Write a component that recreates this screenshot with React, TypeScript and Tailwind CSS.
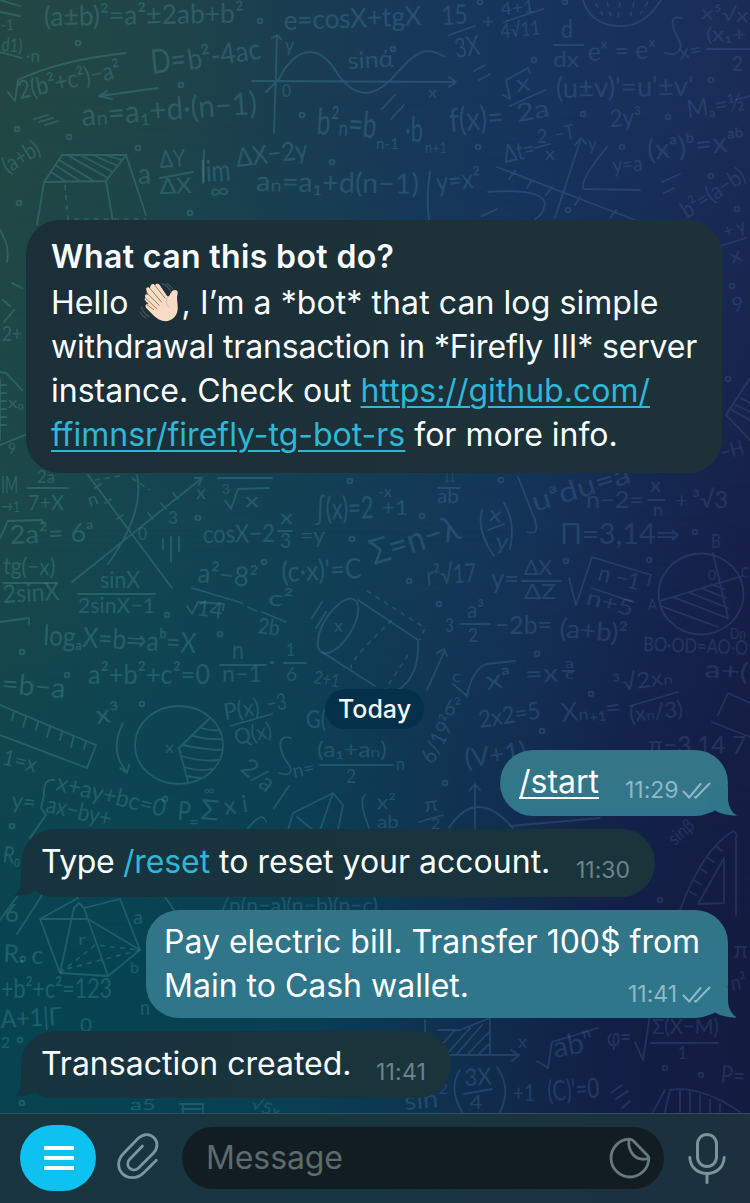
import React from "react";

type Formula = [x: number, y: number, width: number, size: number, angle: number, text: string];

const formulas: Formula[] = [
  [44, 26, 200, 27, -1, "(a±b)²=a²±2ab+b²"],
  [284, 30, 138, 27, -2, "e=cosX+tgX"],
  [1, 30, 13, 15, 0, "-1"],
  [1, 51, 21, 19, 4, "d1)"],
  [26, 62, 14, 17, 0, "·n"],
  [20, 99, 104, 25, -12, "2(b²+c²)−a²"],
  [152, 74, 35, 34, -6, "D="],
  [189, 70, 74, 29, -9, "b²-4ac"],
  [82, 126, 176, 31, -4, "aₙ=a₁+d·(n−1)"],
  [8, 174, 40, 23, -32, "(a+b)"],
  [285, 52, 9, 19, 0, "y"],
  [282, 97, 9, 17, 0, "0"],
  [348, 69, 46, 23, -3, "sinά"],
  [428, 98, 9, 16, 0, "x"],
  [316, 134, 60, 36, 4, "b²ₙ=b"],
  [376, 149, 23, 15, 0, "n-1"],
  [405, 142, 18, 34, 0, "·b"],
  [425, 153, 22, 15, 0, "n+1"],
  [138, 184, 13, 28, 0, "a"],
  [160, 168, 26, 24, -4, "ΔY"],
  [160, 194, 32, 22, -2, "ΔX"],
  [201, 182, 30, 30, -3, "lim"],
  [210, 199, 20, 22, -4, "∞"],
  [237, 167, 72, 26, -7, "ΔX−2y"],
  [256, 191, 163, 28, 1, "aₙ=a₁+d(n−1)"],
  [437, 192, 45, 27, -6, "y=x²"],
  [442, 25, 26, 27, -3, "15"],
  [456, 58, 25, 27, -8, "3X"],
  [482, 28, 12, 20, 0, "+"],
  [501, 15, 34, 17, -5, "4+1"],
  [501, 38, 40, 20, -5, "4√11"],
  [561, 38, 12, 25, 0, "d"],
  [553, 67, 26, 22, 0, "dx"],
  [588, 61, 68, 26, -2, "eˣ = eˣ"],
  [680, 60, 23, 21, -10, "x="],
  [706, 41, 40, 19, 0, "(x₁+"],
  [732, 71, 11, 21, 0, "2"],
  [701, 19, 47, 19, 4, "x⁵√x"],
  [517, 92, 14, 23, -8, "x"],
  [518, 122, 33, 25, -10, "2a"],
  [556, 98, 138, 28, -1, "(u±v)'=u'±v'"],
  [450, 132, 54, 33, -4, "f(x)="],
  [610, 127, 32, 24, -3, "2y³"],
  [688, 118, 58, 25, -8, "Mₐ=½"],
  [505, 163, 32, 25, -12, "Δt="],
  [537, 143, 10, 19, 0, "2"],
  [545, 160, 10, 18, 0, "x"],
  [556, 142, 20, 21, -10, "−T"],
  [588, 150, 9, 17, 0, "y"],
  [613, 173, 30, 22, -4, "y=a"],
  [648, 160, 98, 28, -6, "(xᵃ)ᵇ=xᵃᵇ"],
  [687, 219, 72, 23, -33, "b²=(a−b)"],
  [1, 493, 17, 23, 0, "IM"],
  [37, 483, 18, 17, 0, "2a"],
  [28, 510, 36, 22, 0, "7+X"],
  [1, 512, 19, 16, 0, "→1"],
  [10, 544, 84, 26, -2, "2a²= 6ᵃ"],
  [3, 574, 52, 24, 2, "tg(−x)"],
  [3, 603, 57, 25, -3, "2sinX"],
  [90, 507, 10, 18, -20, "n"],
  [196, 499, 10, 20, 0, "x"],
  [168, 524, 10, 18, 0, "3"],
  [138, 540, 9, 17, 0, "0"],
  [100, 588, 40, 23, 0, "sinX"],
  [78, 613, 77, 22, 0, "2sinX−1"],
  [245, 507, 14, 20, 0, "x"],
  [222, 494, 8, 13, 0, "3"],
  [203, 543, 72, 25, -1, "cosX−2"],
  [280, 524, 13, 20, 0, "x"],
  [280, 548, 11, 21, 0, "3"],
  [300, 543, 25, 22, 0, "=y"],
  [315, 520, 59, 31, -2, "∫(x)=2"],
  [197, 582, 60, 27, 5, "a²−8²"],
  [196, 615, 26, 22, 8, "14"],
  [268, 606, 26, 22, 0, "c²"],
  [257, 633, 22, 22, 8, "2b"],
  [282, 582, 80, 28, -3, "(c·x)'=C"],
  [43, 645, 153, 28, 3, "logₐX=b⇒aᵇ=X"],
  [88, 684, 122, 27, 0, "a²+b²+c²=0"],
  [232, 659, 12, 25, 0, "n"],
  [222, 682, 40, 23, 0, "n−1"],
  [268, 668, 8, 20, 0, "·"],
  [286, 656, 9, 18, 0, "1"],
  [286, 681, 11, 19, 0, "6"],
  [313, 683, 26, 18, 10, "2+1"],
  [1, 693, 64, 28, 5, "=b−a"],
  [334, 632, 9, 17, 0, "x"],
  [444, 482, 11, 17, 0, "11"],
  [437, 503, 22, 20, 0, "ab"],
  [378, 497, 14, 15, 0, "-x"],
  [382, 515, 26, 22, 0, "+1"],
  [374, 565, 92, 35, -17, "Σ=n−λ"],
  [488, 521, 13, 22, 8, "x"],
  [495, 549, 13, 23, 5, "y"],
  [535, 512, 112, 28, -17, "uᵃdu=aⁿ"],
  [586, 508, 58, 23, 0, "n−2="],
  [650, 492, 11, 20, 0, "x"],
  [653, 516, 10, 18, 0, "n"],
  [675, 508, 13, 22, 0, "+"],
  [692, 508, 36, 24, 0, "³√3"],
  [560, 544, 120, 29, 0, "Π=3,14⇒"],
  [427, 585, 50, 26, -4, "r²√17"],
  [491, 588, 28, 26, 0, "y="],
  [524, 575, 28, 22, 0, "ΔX"],
  [524, 599, 32, 22, 0, "ΔZ"],
  [597, 580, 42, 23, 14, "n −1"],
  [585, 604, 48, 22, 15, "n+5"],
  [711, 548, 10, 20, 0, "B"],
  [648, 610, 9, 16, 0, "A"],
  [708, 580, 8, 14, 0, "0"],
  [741, 578, 8, 15, 0, "C"],
  [730, 639, 16, 16, 0, "Dn"],
  [445, 632, 9, 20, 0, "3"],
  [467, 618, 17, 24, 0, "a³"],
  [468, 642, 10, 20, 0, "2"],
  [495, 634, 57, 25, 0, "−2b="],
  [559, 637, 68, 26, 5, "(a+b)²"],
  [643, 651, 105, 20, 2, "BO·OD=AO·O"],
  [452, 682, 9, 16, 0, "c"],
  [487, 690, 26, 26, -10, "xᵃ"],
  [525, 683, 34, 25, -2, "=x"],
  [565, 668, 9, 13, 0, "a"],
  [565, 679, 9, 13, 0, "c"],
  [614, 692, 60, 22, -8, "³√2xₙ"],
  [704, 677, 44, 24, 5, "a+("],
  [97, 724, 24, 25, -8, "x³"],
  [165, 753, 9, 16, 0, "x"],
  [225, 720, 36, 23, -9, "P(x)"],
  [268, 712, 20, 23, -9, "−3"],
  [236, 745, 38, 22, -12, "Q(x)"],
  [306, 728, 20, 25, 0, "G("],
  [239, 770, 36, 25, 40, "2/a"],
  [294, 778, 22, 19, -12, "n="],
  [317, 757, 70, 22, 0, "(a₁+aₙ)"],
  [346, 783, 10, 20, 0, "2"],
  [396, 770, 9, 17, 0, "n"],
  [1, 764, 35, 22, 14, "1=x"],
  [11, 808, 24, 23, 6, "y="],
  [55, 790, 112, 24, 14, "x+ay+bc=0"],
  [45, 812, 66, 24, 13, "ax−by+"],
  [177, 820, 13, 27, 5, "P"],
  [189, 828, 10, 18, 0, "="],
  [200, 819, 18, 28, 5, "Σ"],
  [204, 795, 10, 14, 0, "∞"],
  [225, 815, 24, 24, -8, "x i"],
  [433, 765, 50, 22, -62, "6/19²"],
  [445, 716, 18, 21, -8, "6²"],
  [480, 728, 62, 24, -9, "2x2=5"],
  [562, 722, 60, 26, -6, "Xₙ₊₁="],
  [630, 722, 54, 22, -6, "(xₙ/3)"],
  [648, 754, 98, 25, 0, "π−3,14 7"],
  [466, 768, 62, 26, -8, "(V+1)"],
  [377, 809, 19, 19, 0, "x²"],
  [377, 828, 22, 18, 0, "ab"],
  [425, 812, 14, 20, -8, "π"],
  [431, 829, 9, 15, 0, "2"],
  [675, 846, 28, 19, -42, "sinβ"],
  [2, 862, 18, 23, 8, "R₀"],
  [5, 922, 14, 25, 0, "6"],
  [3, 962, 40, 25, 3, "R. c"],
  [133, 924, 10, 20, 0, "a"],
  [130, 973, 9, 16, 0, "b"],
  [78, 945, 8, 16, 0, "r"],
  [1, 998, 111, 26, 0, "+b²+c²=123"],
  [1, 1028, 61, 25, -3, "A+1|Γ"],
  [80, 1032, 12, 20, 0, "0"],
  [1, 1048, 9, 15, 0, "2"],
  [140, 1015, 10, 22, 0, "n"],
  [220, 913, 158, 22, 0, "/n(n−a)(n−b)(n−c)"],
  [518, 1048, 9, 17, 0, "x"],
  [555, 1058, 40, 29, -11, "abⁿ"],
  [607, 1046, 24, 25, 0, "φ="],
  [652, 1034, 67, 22, 0, "Σ(X−M)"],
  [678, 1059, 9, 17, 0, "1"],
  [465, 1086, 27, 24, -3, "3X"],
  [470, 1109, 12, 20, 0, "4"],
  [513, 1101, 22, 23, 0, "+1"],
  [548, 1101, 52, 28, -4, "(C)'=0"],
  [405, 1110, 34, 25, -5, "sin"],
  [438, 1094, 10, 16, 0, "2"],
  [720, 1083, 24, 25, 5, "P="],
  [732, 991, 16, 22, -10, "n²"],
  [734, 958, 14, 24, 0, "π"],
  [2, 341, 20, 22, 0, "2+"],
  [8, 408, 16, 16, 0, "x₀"],
  [8, 454, 8, 16, 0, "9"],
  [726, 238, 22, 18, -20, "+ y"],
  [732, 264, 12, 20, -20, "x"],
  [733, 312, 12, 20, -10, "9"],
  [722, 460, 24, 20, -15, "−H"],
  [130, 1110, 26, 16, 0, "a5"],
  [250, 1108, 30, 16, 20, "√5x"],
];

const strokes: string[] = [
  "M0 0L20 6M0 12L20 16M0 52L22 58",
  "M8 92L15 101L18 80Q60 60 126 53",
  "M158 88L100 96M107 91L99 96L112 99",
  "M277 36L274 133M272 38L277 35L281 39M252 81L456 82M449 77L456 82L449 87M266 92L279 79C295 47 318 43 335 70S372 102 396 74S430 48 445 57",
  "M34 119L48 115M39 122L53 118M45 125L58 121",
  "M44 182L62 155H126L106 181ZM44 182L37 225M106 181L113 222M126 155L146 215M51 172L65 181M55 165L80 181M59 160L94 181M69 156L108 178M82 156L113 172M95 156L118 166M108 156L122 160",
  "M160 178L193 172M204 150L203 183",
  "M430 172Q426 196 429 220M449 35L475 26M504 22L543 9M554 45H583M510 106L545 90M503 95L510 99L506 80L528 68L530 73",
  "M583 0Q590 24 617 26T661 0M682 18C668 14 672 28 678 38S679 57 665 53M707 49H750M735 100L750 96",
  "M474 71L485 65M479 80L490 74M382 109L395 95M391 119L404 105M662 182L680 174M664 193L674 188",
  "M497 167L635 220M509 179L515 171M527 188L532 180M546 195L552 187M575 205L580 197M610 218L616 210M555 218L580 141M575 145L581 138L586 144M607 147Q578 182 584 189L640 190M488 192Q541 188 545 203Q544 214 535 219M535 148L550 144M482 216L497 209",
  "M28 488H68M3 583H56M0 538L8 521L42 520L43 524M78 594H155M0 622L29 618V624",
  "M88 475L172 588M72 582L202 478M195 478L202 478L199 485M137 475Q145 512 108 564M95 488L101 484M105 503L111 499M117 519L123 515M148 513L153 519M161 503L166 509M173 493L178 499M163 539V549M171 537V562M179 537V551",
  "M218 478H272M225 500L231 509L238 489L269 488M278 531H292M192 588L242 603M187 606L192 614L198 602L224 604L223 610M248 607L256 611M262 612L286 622M220 665H266M284 663H306M312 618L322 602M316 628L326 612",
  "M358 600L418 640Q420 676 398 690M322 652L375 686M427 690L444 652M437 653L444 649L447 656",
  "M438 488H460M482 510Q476 530 494 556M504 503Q516 523 510 549M488 530L504 524M518 477L535 520Q540 536 527 532M648 500H665M522 581H561M569 578L576 605L592 557L651 575L648 585M592 588L633 602M460 624H490M453 684L467 696Q472 670 486 664L515 661M563 671H574",
  "M659 600A42 40 0 1 1 743 588A42 40 0 1 1 659 600M660 601L742 576M713 553L728 618M673 597L727 618M688 592L728 608M701 588L726 598M711 584L724 589M661 606L718 627",
  "M0 705L96 745L87 768L0 735M14 712L12 720M26 717L23 727M38 722L36 730M50 727L47 737M62 732L60 740M74 736L71 747M86 741L84 749",
  "M123 723Q109 750 126 771M120 768L127 773L129 765M135 745A44 39 0 1 1 223 745A44 39 0 1 1 135 745M210 718L179 748L188 782M201 728Q212 731 219 730M193 736Q210 740 222 739M183 745Q205 750 223 750M181 756Q202 762 219 760M184 767Q200 772 212 769M186 776L200 778",
  "M230 726L272 714M291 738C275 733 280 753 287 762S291 777 279 773M320 765H393M54 780Q43 778 44 795L41 808L46 815L30 838M289 786L274 808M248 828Q263 810 266 822",
  "M288 830L293 813L333 793L343 805L338 830M333 793L320 830M297 817L313 830M365 795Q358 800 369 828",
  "M630 706L678 692M718 715L728 693L750 703M712 722L750 737M475 785V828M470 790L475 784L480 790M449 828Q476 786 513 828M510 826L600 818M419 822L443 815",
  "M680 910Q702 850 733 831Q738 833 736 838V915M698 904L724 858V903ZM690 892L696 895M695 881L701 884M701 869L707 873M708 858L714 862M717 847L722 851",
  "M40 919L60 973L108 976L140 950L120 899M40 919H88L140 950M40 919L78 898M60 973L74 908L79 903L84 908L108 976M84 908L120 899M0 920L22 890M17 934L42 895M163 894L174 910",
  "M425 1020V1055H518M511 1050L519 1055L512 1061M438 1030L460 1030L490 1018V1055M437 1050L455 1030M446 1055L470 1028M456 1055L482 1025M467 1055L489 1032M478 1055L489 1044",
  "M537 1061L548 1068L552 1042L598 1028M635 1042L643 1060L650 1015M651 1043H718M460 1070Q448 1088 462 1112M497 1067Q512 1088 500 1112M464 1094L492 1089M611 1093L622 1085M616 1099L628 1091M622 1108L630 1101",
  "M653 1112L665 1090M665 1112L670 1090Q700 1085 740 1112M680 1090V1112M690 1092V1112M700 1095V1112M710 1099V1112M720 1104V1112",
  "M180 1104H203V1112M183 1104V1112M182 1109H201",
  "M726 415L750 378M726 415L750 440M736 405L750 412M732 410L750 420M741 398L750 403",
  "M0 372L6 373L22 390M0 380V440M0 445L25 435M0 385H6M0 393H6M0 401H6M0 409H6M0 417H6M0 425H6",
  "M0 230Q10 245 7 262M12 283L22 288M3 300L10 306M14 310L4 322M720 246L746 238",
];

const dashedStrokes: string[] = [
  "M65 185L68 219H146",
  "M367 591L425 628L420 640M392 620Q345 665 352 668M408 655L385 690",
  "M595 3L603 15M607 2L612 20M620 2L618 20M634 2L630 18M648 2L640 14",
  "M60 973L95 945L140 950L62 970",
  "M95 480L120 476M132 478L150 490",
];

const dots: [number, number][] = [
  [78, 43], [181, 85], [260, 21], [302, 115], [17, 129], [69, 137], [138, 148], [332, 162], [19, 203], [190, 213],
  [480, 2], [565, 2], [393, 49], [534, 60], [583, 114], [668, 117], [478, 147], [622, 147], [711, 80], [711, 176], [737, 209], [568, 210],
  [22, 652], [67, 675], [198, 518], [350, 481], [352, 539], [264, 562], [220, 634], [167, 615],
  [501, 480], [422, 516], [409, 581], [439, 604], [566, 561], [695, 532], [649, 560], [537, 654], [591, 694],
  [142, 704], [165, 799], [12, 826], [542, 731], [445, 783], [23, 959], [20, 1040], [22, 1103], [665, 1068], [701, 1075], [660, 900],
  [732, 286], [728, 379],
];

function Wallpaper() {
  return (
    <div className="absolute inset-0 -z-10">
      <div className="absolute inset-0 bg-[linear-gradient(90deg,#224743_0%,#1f4547_20%,#1a3e50_38%,#17385a_55%,#16345c_72%,#18305a_88%,#1a2c56_100%)]" />
      <div className="absolute inset-0 bg-[linear-gradient(90deg,#1b4849_0%,#134651_20%,#123f55_45%,#143558_68%,#15264f_88%,#162048_100%)] [mask-image:linear-gradient(180deg,transparent_8%,black_46%)]" />
      <div className="absolute inset-0 bg-[linear-gradient(90deg,#074451_0%,#064352_18%,#093e53_42%,#0f304f_60%,#121e45_82%,#131b40_100%)] [mask-image:linear-gradient(180deg,transparent_44%,black_80%)]" />
      <svg className="absolute inset-0" width="750" height="1203" viewBox="0 0 750 1203" fill="none" aria-hidden="true">
        <defs>
          <linearGradient id="ink" gradientUnits="userSpaceOnUse" x1="0" y1="0" x2="750" y2="0">
            <stop offset="0" stopColor="#58b5a8" stopOpacity="0.26" />
            <stop offset="0.45" stopColor="#4f9fb4" stopOpacity="0.26" />
            <stop offset="0.75" stopColor="#5a86bd" stopOpacity="0.23" />
            <stop offset="1" stopColor="#6076b0" stopOpacity="0.21" />
          </linearGradient>
        </defs>
        <g stroke="url(#ink)" strokeWidth="1.8" strokeLinecap="round" strokeLinejoin="round">
          {strokes.map((d) => (
            <path key={d} d={d} />
          ))}
          <ellipse cx="338" cy="626" rx="14" ry="31" transform="rotate(32 338 626)" />
          {dots.map(([x, y]) => (
            <circle key={`${x}-${y}`} cx={x} cy={y} r="2.4" />
          ))}
        </g>
        <g stroke="url(#ink)" strokeWidth="1.6" strokeDasharray="5 5">
          {dashedStrokes.map((d) => (
            <path key={d} d={d} />
          ))}
        </g>
        <g fill="url(#ink)" className="font-['Lato','DejaVu_Sans',sans-serif] font-normal">
          {formulas.map(([x, y, width, size, angle, text]) => (
            <text
              key={`${x}-${y}`}
              x={x}
              y={y}
              fontSize={size}
              textLength={width}
              lengthAdjust="spacingAndGlyphs"
              transform={`rotate(${angle} ${x} ${y})`}
            >
              {text}
            </text>
          ))}
        </g>
      </svg>
    </div>
  );
}

function WavingHand() {
  return (
    <svg className="mx-[1px] inline-block h-[42px] w-[42px] align-[-9px]" viewBox="0 0 42 42" fill="none" aria-label="Waving hand">
      <path
        d="M6.4 16.4C5 14.4 7.3 12.2 9.1 13.8L7.4 9.3C6.4 6.8 9.2 5.3 10.8 7.3L11.5 5.2C12 2.5 14.8 2.2 16 4.3C17.3 2 20 2.5 21 4.4L27.9 14.7C29.2 15.8 30.3 15.2 31 13.5C31.9 11.2 33 8.9 36 9C38.5 9.1 39.3 11.1 38.5 13.3C37.3 17.3 38.7 21.5 38.8 26.8C38.8 35.7 32.2 41 24.6 40.1C18.8 39.3 14.8 34.7 10.9 30.8L7.5 27.2C5.3 24.8 7.3 22 9.9 23.5L6.2 19.4C5.4 18.3 5.5 17.3 6.4 16.4Z"
        fill="#f8dcc3"
      />
      <path d="M11 7.5L22.5 21M16 4.4L26 17.2M7.4 11.7L20.2 24.3M6.4 17.2L18 27.8M7.4 23.2L14.6 28.7" stroke="#9c7d6a" strokeWidth="1" strokeLinecap="round" />
      <path d="M28.8 15.5Q25.5 20.5 29.5 26" stroke="#dcbca4" strokeWidth="1" strokeLinecap="round" />
      <path d="M23.3 2.7Q29 5 32.1 11M27.9 2.8Q31.5 4.4 34 8M2.5 26Q4 32.5 10.6 36M1.2 31Q3 35 7 37.2" stroke="#42525b" strokeWidth="1.3" strokeLinecap="round" />
    </svg>
  );
}

function ReadTicks() {
  return (
    <svg className="h-[18px] w-[29px]" viewBox="0 0 29 18" fill="none" stroke="currentColor" strokeWidth="2" strokeLinecap="round">
      <path d="M1.5 9.5L7.2 15.500L18.5 2M13 15L13.800 15.700L27.500 1.500" />
    </svg>
  );
}

function OutgoingTail() {
  return (
    <svg className="absolute right-[-9px] bottom-0 h-[30px] w-[28px] text-[#30768a]" viewBox="0 0 28 30" fill="currentColor">
      <path d="M0 27Q3 26 6 24.500Q14 29.500 28 29.800Q20 25 19 14V0H0Z" />
    </svg>
  );
}

function IncomingTail() {
  return (
    <svg className="absolute bottom-0 left-[-7px] h-[32px] w-[30px] text-[#17333e]" viewBox="0 0 30 32" fill="currentColor">
      <path d="M30 30Q26 28.500 21 26Q14 30.800 0 31Q7 26 7 15V0H30Z" />
    </svg>
  );
}

function Welcome() {
  return (
    <section className="mt-[220px] ml-[26px] h-[253px] w-[696px] rounded-[34px] bg-linear-to-r from-[#1b2f38] to-[#1d3238] pt-[15px] pl-[25px] text-[32px] leading-[44px] whitespace-nowrap text-[#fafdff]">
      <h1 className="h-[46px] leading-[44px] font-semibold">
        <span className="tracking-[0.37px]">What can this bot do?</span>
      </h1>
      <p>
        <span className="block h-[44px] tracking-[0.08px]">
          Hello <WavingHand />, I’m a *bot* that can log simple
        </span>
        <span className="block tracking-[-0.17px]">withdrawal transaction in *Firefly III* server</span>
        <span className="block">
          instance. Check out{" "}
          <a className="text-[#2fb7d8] underline decoration-2 underline-offset-[4px]">https://github.com/</a>
        </span>
        <span className="block">
          <a className="text-[#2fb7d8] underline decoration-2 underline-offset-[4px]">ffimnsr/firefly-tg-bot-rs</a> for more info.
        </span>
      </p>
    </section>
  );
}

function InputBar() {
  return (
    <footer className="mt-auto flex h-[90px] items-start border-t border-[#34505c] bg-linear-to-r from-[#18343f] via-[#183640] to-[#1c303d] pt-[11px]">
      <button className="ml-[20px] flex h-[66px] w-[76px] flex-col items-center justify-center gap-[6px] rounded-[33px] bg-[#0dc2f1] pl-[2px]">
        <span className="h-[4px] w-[30px] rounded-[1px] bg-white" />
        <span className="h-[4px] w-[30px] rounded-[1px] bg-white" />
        <span className="h-[4px] w-[30px] rounded-[1px] bg-white" />
      </button>
      <svg className="mt-[8px] ml-[20px] h-[50px] w-[44px]" viewBox="0 0 44 50" fill="none" stroke="#7b98a1" strokeWidth="2.8" strokeLinecap="round">
        <path d="M40.3 27.300L28 39.500C20.500 47 11 45.500 6.300 40.500C1.500 35.500 1 27 7.500 20.500L22 5.500C28 -0.200 34.500 1 38.200 5C42 9 42 15 37.500 20L22.500 35C16.500 40.500 8 33 13.500 26.500L26.500 13" />
      </svg>
      <div className="mt-[2px] ml-[22px] flex h-[62px] w-[482px] items-center justify-between rounded-full bg-[#121d22] pr-[13px] pl-[24px]">
        <span className="text-[32px] leading-[40px] tracking-[-0.1px] text-[#5d6a6e]">Message</span>
        <svg className="h-[42px] w-[42px]" viewBox="0 0 42 42" fill="none" stroke="#667a7d" strokeWidth="2.800" strokeLinejoin="round">
          <path d="M20 2.200A18.900 18.900 0 1 0 39.800 21.500C40 20.300 39.500 19.600 38.500 18.500L24.500 4C23 2.500 22 2.200 20 2.200ZM20 2.200C18.500 14.500 26 25 39.800 21.500" />
        </svg>
      </div>
      <svg className="mt-[7px] ml-[24px] h-[54px] w-[38px]" viewBox="0 0 38 54" fill="none" stroke="#7b939b" strokeWidth="3" strokeLinecap="round">
        <rect x="9.500" y="2.500" width="19" height="32" rx="9.500" />
        <path d="M1.800 25.500C2.500 36 10 41.500 19 41.500S35.500 36 36.200 25.500M19 42V50.500" />
      </svg>
    </footer>
  );
}

export default function App() {
  return (
    <main className="relative isolate flex h-[1203px] w-[750px] flex-col overflow-hidden font-['Inter',sans-serif] [font-feature-settings:'calt'_0]">
      <Wallpaper />
      <Welcome />

      <div className="mt-[216px] ml-[325px] flex h-[40px] w-[99px] items-center justify-center rounded-full bg-[#04304a] pb-[1px] text-[25px] leading-[30px] font-medium text-[#f2f9fc]">
        Today
      </div>

      <div className="relative mt-[21px] ml-[500px] flex h-[66px] w-[228px] rounded-[33px] bg-linear-to-b from-[#347687] to-[#30768a] text-[32px] leading-[44px] text-white">
        <OutgoingTail />
        <a className="relative mt-[10px] ml-[19px] w-[82px] underline decoration-2 underline-offset-[4px]">/start</a>
        <span className="relative mt-[25px] ml-[24px] text-[23px] leading-[30px] text-[#8fb9c5]">11:29</span>
        <span className="relative mt-[32px] ml-auto mr-[17px] text-[#8fb9c5]"><ReadTicks /></span>
      </div>

      <div className="relative mt-[13px] ml-[21px] flex h-[68px] w-[634px] rounded-[34px] bg-linear-to-r from-[#17333e] to-[#1a343b] text-[32px] leading-[44px] text-[#fafdff]">
        <IncomingTail />
        <p className="relative mt-[11px] ml-[20px] w-[512px] whitespace-nowrap">
          <span className="tracking-[-0.4px]">Type </span><a className="tracking-[-0.1px] text-[#2fb7d8]">/reset</a> to reset your account.
        </p>
        <span className="relative mt-[26px] ml-[23px] text-[23px] leading-[30px] text-[#6c838c]">11:30</span>
      </div>

      <div className="relative mt-[13px] ml-[146px] h-[108px] w-[582px] rounded-[33px] bg-linear-to-b from-[#327588] to-[#2d768b] text-[32px] leading-[44px] text-white">
        <OutgoingTail />
        <div className="relative flex h-full flex-col pt-[10px] pl-[18px] whitespace-nowrap">
          <span>Pay electric bill. Transfer 100$ from</span>
          <span className="flex">
            <span className="w-[305px]">Main to Cash wallet.</span>
            <span className="mt-[15px] ml-[159px] text-[23px] leading-[30px] text-[#8fb9c5]">11:41</span>
            <span className="mt-[22px] mr-[17px] ml-auto text-[#8fb9c5]"><ReadTicks /></span>
          </span>
        </div>
      </div>

      <div className="relative mt-[13px] ml-[21px] flex h-[67px] w-[430px] rounded-[33px] bg-linear-to-r from-[#17333e] to-[#1a343b] text-[32px] leading-[44px] text-[#fafdff]">
        <IncomingTail />
        <p className="relative mt-[11px] ml-[20px] w-[312px] whitespace-nowrap">Transaction created.</p>
        <span className="relative mt-[26px] ml-[23px] text-[23px] leading-[30px] tracking-[0.2px] text-[#6c838c]">11:41</span>
      </div>

      <InputBar />
    </main>
  );
}
